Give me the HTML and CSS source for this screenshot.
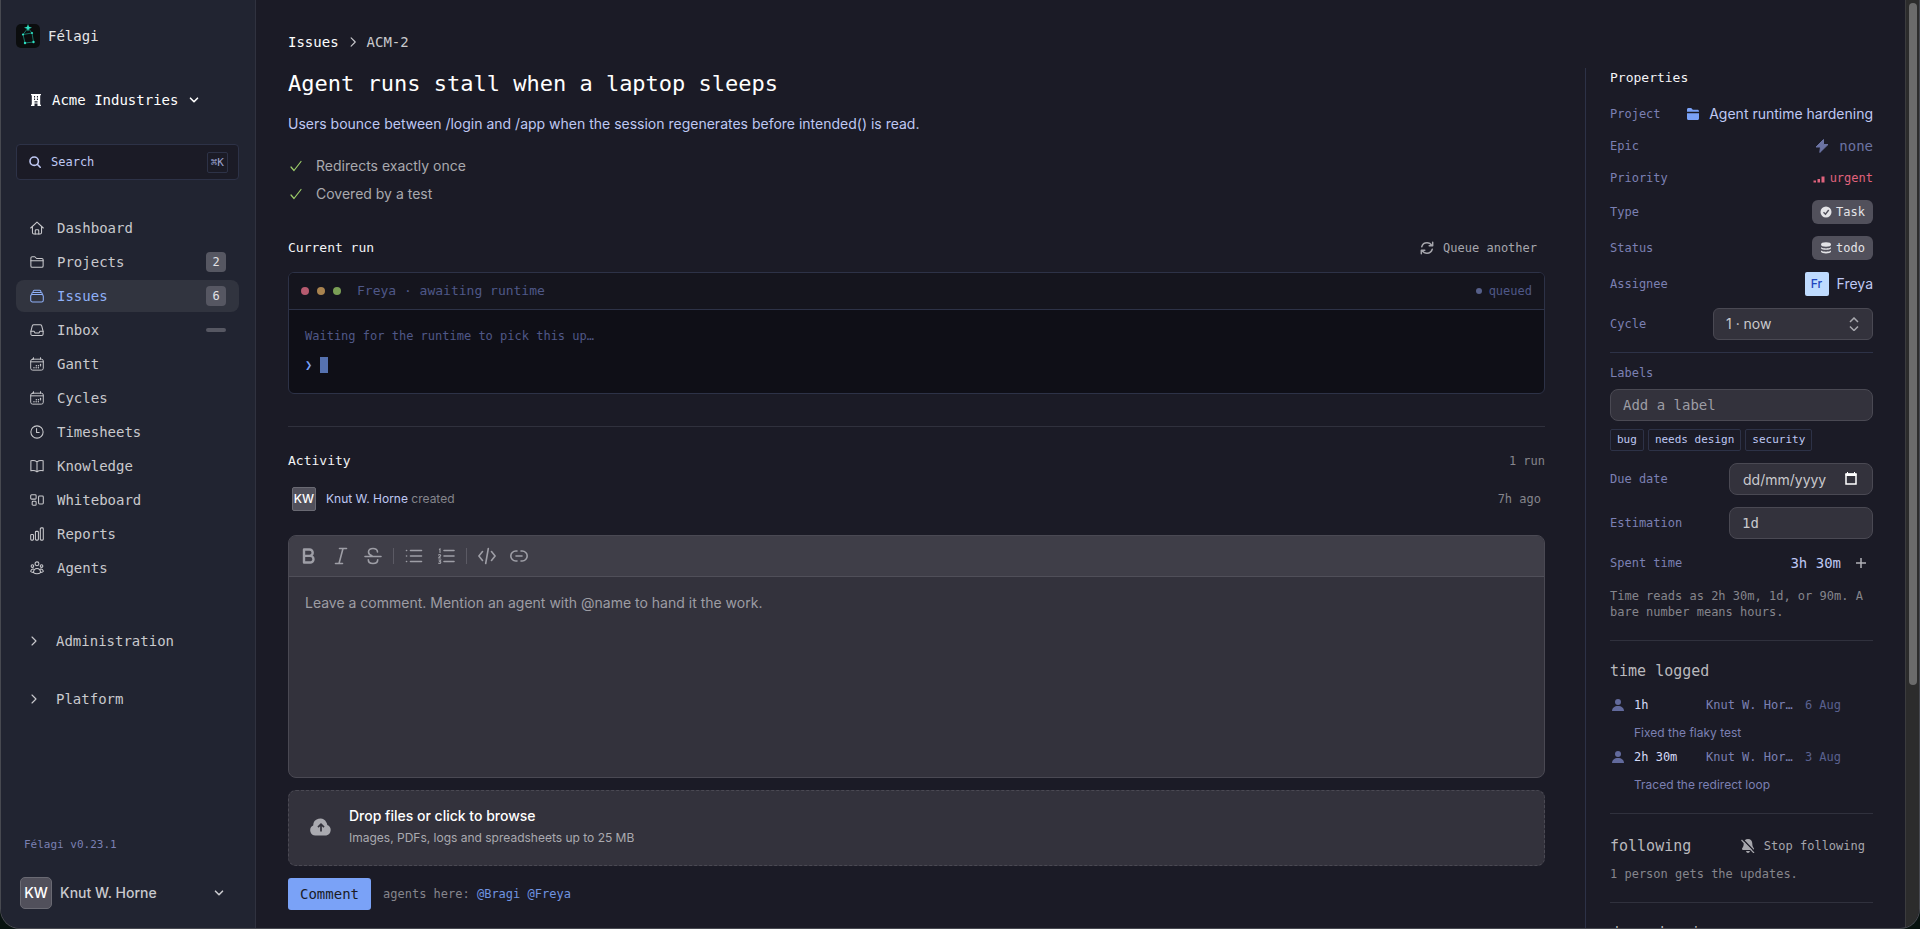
FILE: index.html
```
<!DOCTYPE html>
<html lang="en">
<head>
<meta charset="utf-8">
<title>ACM-2 · Félagi</title>
<link rel="stylesheet" href="styles.css">
</head>
<body>
<svg class="sprite" aria-hidden="true">
  <symbol id="down" viewBox="0 0 16 16"><path d="M4.500 6.200l3.500 3.500 3.500-3.500" fill="none" stroke="currentColor" stroke-width="1.600" stroke-linecap="round" stroke-linejoin="round"/></symbol>
  <symbol id="right" viewBox="0 0 16 16"><path d="M5.500 2.500l5.500 5.500-5.500 5.500" fill="none" stroke="currentColor" stroke-width="1.500" stroke-linecap="round" stroke-linejoin="round"/></symbol>
  <symbol id="chevron" viewBox="0 0 12 12"><path d="M2 2l4 4-4 4" fill="none" stroke="currentColor" stroke-width="1.100" stroke-linecap="round" stroke-linejoin="round"/></symbol>
  <symbol id="calendar" viewBox="0 0 16 16"><g fill="none" stroke="currentColor" stroke-width="1.100" stroke-linecap="round" stroke-linejoin="round"><rect x=".8" y="2.500" width="14.400" height="12.500" rx="2.200"/><path d="M4 .8v1.700M12 .8v1.700M.8 5.500h14.400"/><path d="M4.500 12.300h.1M7 12.300h.1M9.500 12.300h.1M7.200 10h.1M9.600 10h.1M12 10h.1M12 8.500h.1" stroke-width="1.500"/></g></symbol>
  <symbol id="user" viewBox="0 0 12 12"><circle cx="6" cy="3" r="3" fill="currentColor"/><path d="M0 12c0-3 2.500-5 6-5s6 2 6 5z" fill="currentColor"/></symbol>
  <symbol id="check" viewBox="0 0 14 14"><path d="M2 8l3 3.500 7-9" fill="none" stroke="currentColor" stroke-width="1.200" stroke-linecap="round" stroke-linejoin="round"/></symbol>
</svg>
<div class="frame">
  <aside class="sidebar">
    <a class="brand" href="#">
      <svg class="logo" viewBox="0 0 24 24" aria-hidden="true"><rect width="24" height="24" rx="5" fill="#0b0d0e"/><path d="M12 4L7 10.500l2 8.500 8.500-1L16 9z" fill="none" stroke="#1a8a7a" stroke-width=".8"/><path d="M7 10.500L16 9" stroke="#1a8a7a" stroke-width=".8"/><path d="M12 0l1 2.700L16 3.800l-3 1L12 7.500l-1-2.700-3-1 3-1.100z" fill="#2ee0c2"/><g fill="#2ee0c2"><circle cx="7" cy="10.500" r="1.100"/><circle cx="16" cy="9" r="1.100"/><circle cx="9" cy="19" r="1.200"/><circle cx="17.500" cy="18" r="1.200"/></g></svg>
      <span>Félagi</span>
    </a>
    <button class="workspace" type="button">
      <svg class="icon12" viewBox="0 0 12 12" aria-hidden="true"><path fill="currentColor" fill-rule="evenodd" d="M1 0h10v1.200h-.8v9.600h.8V12H7.500V9.500h-3V12H1v-1.200h.8V1.200H1zm3 2v1.400h1.100V2zm2.900 0v1.400H8V2zM4 4.500v1.400h1.100V4.500zm2.900 0v1.400H8V4.500zM4.500 7.200v1.200h3V7.200z"/></svg>
      <span>Acme Industries</span>
      <svg class="icon16" aria-hidden="true"><use href="#down"/></svg>
    </button>
    <button class="search" type="button">
      <svg class="icon12" viewBox="0 0 12 12" aria-hidden="true"><g fill="none" stroke="currentColor" stroke-width="1.600" stroke-linecap="round"><circle cx="5.200" cy="5.200" r="4.200"/><path d="M8.500 8.500l2.700 2.700"/></g></svg>
      <span>Search</span>
      <kbd>⌘K</kbd>
    </button>
    <nav class="nav">
      <a href="#"><svg class="icon14" viewBox="0 0 16 16"><g class="line"><path d="M.8 8L8 1.200 15.200 8M2.800 6.500V13c0 1 .7 1.800 1.700 1.800h7c1 0 1.700-.8 1.700-1.800V6.500"/><path d="M6 14.800V11c0-.6.400-1 1-1h2c.6 0 1 .4 1 1v3.800"/></g></svg><span>Dashboard</span></a>
      <a href="#"><svg class="icon14" viewBox="0 0 16 16"><g class="line"><path d="M1 12.500v-9C1 2.500 1.700 2 2.500 2h3l2 2h6c.8 0 1.500.6 1.500 1.500v7c0 .9-.7 1.500-1.500 1.500h-11C1.700 14 1 13.400 1 12.500z"/><path d="M1 6.500h14"/></g></svg><span>Projects</span><b class="badge">2</b></a>
      <a href="#" class="active" aria-current="page"><svg class="icon14" viewBox="0 0 16 16"><g class="line"><rect x=".8" y="6.200" width="14.400" height="8.600" rx="2"/><path d="M2 6.200V5.500C2 4.600 2.600 4 3.500 4h9c.9 0 1.500.6 1.500 1.500v.7M3.500 4v-.8c0-1 .6-1.700 1.500-1.700h6c.9 0 1.500.7 1.500 1.700V4"/></g></svg><span>Issues</span><b class="badge">6</b></a>
      <a href="#"><svg class="icon14" viewBox="0 0 16 16"><g class="line"><path d="M1 9.500L2.600 3.300C2.900 2.400 3.500 2 4.300 2h7.400c.8 0 1.400.4 1.700 1.300L15 9.500v3c0 1-.6 1.700-1.600 1.700H2.600c-1 0-1.600-.7-1.600-1.700z"/><path d="M1 9.500h3.600l1.200 2h4.400l1.200-2H15"/></g></svg><span>Inbox</span><b class="badge empty"></b></a>
      <a href="#"><svg class="icon14"><use href="#calendar"/></svg><span>Gantt</span></a>
      <a href="#"><svg class="icon14"><use href="#calendar"/></svg><span>Cycles</span></a>
      <a href="#"><svg class="icon14" viewBox="0 0 16 16"><g class="line"><circle cx="8" cy="8" r="7"/><path d="M7.500 4v4.500H10.500"/></g></svg><span>Timesheets</span></a>
      <a href="#"><svg class="icon14" viewBox="0 0 16 16"><g class="line"><path d="M8 3.200C6 1.700 3.500 1.500 1 2v11.500c2.500-.5 5-.3 7 1.200 2-1.500 4.500-1.700 7-1.200V2c-2.500-.5-5-.3-7 1.200zM8 3.200v11.500"/></g></svg><span>Knowledge</span></a>
      <a href="#"><svg class="icon14" viewBox="0 0 16 16"><g class="line"><rect x=".8" y="2" width="6.200" height="5" rx="1"/><rect x="2.500" y="9.500" width="4.500" height="4.500" rx="1"/><rect x="9.800" y="3.500" width="5.400" height="9" rx="1"/></g></svg><span>Whiteboard</span></a>
      <a href="#"><svg class="icon14" viewBox="0 0 16 16"><g class="line"><rect x=".8" y="8.500" width="3.200" height="6.500" rx="1"/><rect x="6.200" y="5" width="3.400" height="10" rx="1"/><rect x="11.800" y="1" width="3.400" height="14" rx="1"/></g></svg><span>Reports</span></a>
      <a href="#"><svg class="icon14" viewBox="0 0 16 16"><g class="line"><circle cx="8" cy="3.200" r="2.200"/><circle cx="2.800" cy="5.800" r="1.500"/><circle cx="13.200" cy="5.800" r="1.500"/><path d="M4 13.200C4 10.300 5.700 8.500 8 8.500s4 1.800 4 4.700c-1 .9-2.400 1.400-4 1.400s-3-.5-4-1.400zM4 9.300C2.300 9 1 10 .8 12c.6.600 1.400.900 2.600 1M12 9.300c1.700-.3 3 .7 3.200 2.700-.6.600-1.400.9-2.600 1"/></g></svg><span>Agents</span></a>
    </nav>
    <div class="groups">
      <button type="button"><svg class="icon12"><use href="#chevron"/></svg><span>Administration</span></button>
      <button type="button"><svg class="icon12"><use href="#chevron"/></svg><span>Platform</span></button>
    </div>
    <p class="version">Félagi v0.23.1</p>
    <button class="account" type="button">
      <span class="avatar large">KW</span>
      <span class="account-name">Knut W. Horne</span>
      <svg class="icon16" aria-hidden="true"><use href="#down"/></svg>
    </button>
  </aside>

  <main class="page">
    <nav class="crumbs" aria-label="Breadcrumb">
      <a href="#">Issues</a>
      <svg class="icon12" aria-hidden="true"><use href="#right"/></svg>
      <span>ACM-2</span>
    </nav>
    <div class="columns">
      <div class="issue">
        <h1>Agent runs stall when a laptop sleeps</h1>
        <p class="summary">Users bounce between /login and /app when the session regenerates before intended() is read.</p>
        <ul class="criteria">
          <li><svg class="icon14"><use href="#check"/></svg>Redirects exactly once</li>
          <li><svg class="icon14"><use href="#check"/></svg>Covered by a test</li>
        </ul>
        <div class="run-head">
          <h2>Current run</h2>
          <button class="ghost" type="button"><svg class="icon14" viewBox="0 0 16 16" aria-hidden="true"><g fill="none" stroke="currentColor" stroke-width="1.700" stroke-linecap="round" stroke-linejoin="round"><path d="M2 6.500C2.800 3.800 5.200 2 8 2c2.300 0 4.300 1.200 5.400 3M14.500 1.500v4h-4M14 9.500c-.8 2.700-3.200 4.500-6 4.500-2.300 0-4.300-1.200-5.400-3M1.500 14.500v-4h4"/></g></svg><span>Queue another</span></button>
        </div>
        <section class="terminal">
          <header>
            <i class="dot red"></i><i class="dot amber"></i><i class="dot green"></i>
            <span class="terminal-title">Freya · awaiting runtime</span>
            <span class="queued">queued</span>
          </header>
          <div class="terminal-body">
            <p>Waiting for the runtime to pick this up…</p>
            <p class="prompt"><span>❯</span><i></i></p>
          </div>
        </section>
        <div class="activity-head">
          <h2>Activity</h2>
          <span>1 run</span>
        </div>
        <div class="event">
          <span class="avatar">KW</span>
          <p><b>Knut W. Horne</b> created</p>
          <time>7h ago</time>
        </div>
        <form class="composer">
          <div class="editor">
            <div class="toolbar">
              <button type="button" aria-label="Bold"><svg viewBox="0 0 18 18"><path d="M4 2.500h5.500a3.200 3.200 0 0 1 0 6.400H4zM4 8.900h6.200a3.300 3.300 0 0 1 0 6.600H4z" fill="none" stroke="currentColor" stroke-width="2.400" stroke-linejoin="round"/></svg></button>
              <button type="button" aria-label="Italic"><svg viewBox="0 0 18 18"><path class="tool" d="M7.500 1.500h7M3.500 16.500h7M11 1.500l-4 15"/></svg></button>
              <button type="button" aria-label="Strikethrough"><svg viewBox="0 0 18 18"><path class="tool" d="M1 9.500h16M13.500 5c0-2-1.800-3.500-4.500-3.500S4.500 3 4.500 5c0 2 1.500 3 3.500 3.700M13.700 12.700c0 2.300-2 3.800-4.700 3.800s-4.700-1.500-4.700-3.800"/></svg></button>
              <i></i>
              <button type="button" aria-label="Bullet list"><svg viewBox="0 0 18 18"><path class="tool" d="M5.500 3.500h11M5.500 9h11M5.500 14.500h11M1.500 3.500h.1M1.500 9h.1M1.500 14.500h.1"/></svg></button>
              <button type="button" aria-label="Numbered list"><svg viewBox="0 0 18 18"><path class="tool" d="M7 3.500h10M7 9h10M7 14.500h10"/><path d="M2 2.500l1-.5v4M1.500 8.500c0-1.300 2.200-1.200 2.200 0 0 .8-2 1.400-2 2.500h2.200M1.500 13h2.200l-1 1.400c1.500 0 1.500 2-.2 2-.5 0-.9-.1-1.200-.5" fill="none" stroke="currentColor" stroke-width="1.100"/></svg></button>
              <i></i>
              <button type="button" aria-label="Code"><svg viewBox="0 0 18 18"><path class="tool" d="M4.500 4.500L.9 9l3.600 4.500M13.500 4.500L17.100 9l-3.600 4.500M10.300 1.500L7.700 16.500"/></svg></button>
              <button type="button" aria-label="Link"><svg viewBox="0 0 18 18"><path class="tool" d="M7 4H5.800a5 5 0 0 0 0 10H7M11 4h1.200a5 5 0 0 1 0 10H11M6 9h6"/></svg></button>
            </div>
            <textarea aria-label="Comment" placeholder="Leave a comment. Mention an agent with @name to hand it the work."></textarea>
          </div>
          <button class="dropzone" type="button">
            <svg viewBox="0 0 22 18" aria-hidden="true"><path d="M5.500 17.500a5.200 5.200 0 0 1-2.300-9.900A7 7 0 0 1 16.300 4.200c.6 1 .8 1.600 1 2.700a5.600 5.600 0 0 1-1 10.600z" fill="currentColor"/><path d="M11 13.500V6.500M8 9.200l3-3 3 3" fill="none" stroke="#33323c" stroke-width="1.700"/></svg>
            <span><strong>Drop files or click to browse</strong><small>Images, PDFs, logs and spreadsheets up to 25 MB</small></span>
          </button>
          <div class="submit">
            <button class="primary" type="submit">Comment</button>
            <p>agents here: <a href="#">@Bragi</a> <a href="#">@Freya</a></p>
          </div>
        </form>
      </div>

      <aside class="properties">
        <h2>Properties</h2>
        <div class="rows">
          <div class="row"><span class="label">Project</span><a class="project" href="#"><svg class="icon12" viewBox="0 0 12 12"><path d="M0 3.800V1.500C0 .6.600 0 1.500 0h2.700l1.600 1.700h4.700c.9 0 1.500.6 1.500 1.500v.6zM0 5.200h12v5.300c0 .9-.6 1.500-1.500 1.500h-9C.6 12 0 11.400 0 10.500z" fill="currentColor"/></svg><span>Agent runtime hardening</span></a></div>
          <div class="row"><span class="label">Epic</span><span class="epic"><svg class="icon14" viewBox="0 0 14 14"><path d="M8.500 0.500L1 8h4.500L4.800 13.500 13 5.500H8.500z" fill="currentColor" stroke="currentColor" stroke-linejoin="round"/></svg>none</span></div>
          <div class="row"><span class="label">Priority</span><span class="urgent"><svg class="icon12" viewBox="0 0 12 12"><path d="M.5 8.500h2.500v2H.5zM4.500 7h2.500v3.500H4.500zM8.500 4.500h3v6h-3z" fill="currentColor"/></svg>urgent</span></div>
          <div class="row"><span class="label">Type</span><span class="tag"><svg class="icon12" viewBox="0 0 12 12"><circle cx="6" cy="6" r="5.500" fill="currentColor"/><path d="M3.500 6.200l2 2L8.700 4" fill="none" stroke="#51505b" stroke-width="1.400"/></svg>Task</span></div>
          <div class="row"><span class="label">Status</span><span class="tag"><svg class="icon12" viewBox="0 0 12 12"><ellipse cx="6" cy="2.500" rx="5" ry="2.200" fill="currentColor"/><path d="M1 5.200c2 1.600 8 1.600 10 0v1c-1 2-9 2-10 0zM1 8.500c2 1.600 8 1.600 10 0v1.200c-1 2.300-9 2.300-10 0z" fill="currentColor"/></svg>todo</span></div>
          <div class="row"><span class="label">Assignee</span><span class="assignee"><span class="avatar pale">Fr</span>Freya</span></div>
          <div class="row"><label class="label" for="cycle">Cycle</label><span class="select"><select id="cycle"><option>1 · now</option></select><svg viewBox="0 0 10 14" aria-hidden="true"><path d="M1 5l4-4 4 4M1 9.500l4 4 4-4" fill="none" stroke="currentColor" stroke-width="1.500"/></svg></span></div>
          <hr>
          <div class="labels">
            <label class="label" for="labels">Labels</label>
            <input class="field mono" id="labels" type="text" placeholder="Add a label">
            <div class="chips"><span>bug</span><span>needs design</span><span>security</span></div>
          </div>
          <div class="row"><label class="label" for="due">Due date</label><span class="date"><input class="field" id="due" type="text" placeholder="dd/mm/yyyy"><svg viewBox="0 0 12 13" aria-hidden="true"><path d="M1 2h10v10H1z" fill="none" stroke="currentColor" stroke-width="1.500"/><path d="M1 2h10v1.500H1zM2.500 0v2M9.500 0v2" fill="currentColor" stroke="currentColor"/></svg></span></div>
          <div class="row"><label class="label" for="estimate">Estimation</label><input class="field short" id="estimate" type="text" value="1d"></div>
          <div class="row"><span class="label">Spent time</span><span class="spent">3h 30m<button type="button" aria-label="Log time"><svg class="icon12" viewBox="0 0 12 12"><path d="M6 1v10M1 6h10" stroke="currentColor" stroke-width="1.500"/></svg></button></span></div>
          <p class="hint">Time reads as 2h 30m, 1d, or 90m. A bare number means hours.</p>
        </div>
        <section class="block">
          <h3>time logged</h3>
          <ul class="log">
            <li><svg class="icon12"><use href="#user"/></svg><b>1h</b><span>Knut W. Hor…</span><time>6 Aug</time><p>Fixed the flaky test</p></li>
            <li><svg class="icon12"><use href="#user"/></svg><b>2h 30m</b><span>Knut W. Hor…</span><time>3 Aug</time><p>Traced the redirect loop</p></li>
          </ul>
        </section>
        <section class="block following">
          <div class="block-head"><h3>following</h3><button class="ghost" type="button"><svg class="icon14" viewBox="0 0 14 14" aria-hidden="true"><path d="M7 0C4.300 0 2.700 2 2.700 4.500c0 2.500-.7 3.500-1.700 5 0 1 .5 1.500 1.500 1.500h9c1 0 1.500-.5 1.500-1.500-1-1.500-1.700-2.500-1.700-5C11.300 2 9.700 0 7 0zM5 12c.4 1.200 1 2 2 2s1.600-.8 2-2z" fill="currentColor"/><path d="M1.500 0L14 13" stroke="#1b1b26" stroke-width="1.400"/><path d="M.5 1L13 14" stroke="currentColor" stroke-width="1.200"/></svg><span>Stop following</span></button></div>
          <p>1 person gets the updates.</p>
        </section>
        <section class="block"><h3>dependencies</h3></section>
      </aside>
    </div>
  </main>
  <div class="scrollbar" aria-hidden="true"><i></i></div>
</div>
</body>
</html>
```
FILE: styles.css
```
:root {
  --mono: "DejaVu Sans Mono", "Liberation Mono", monospace;
  --sans: Inter, "Liberation Sans", sans-serif;
  --bg: #1b1b26;
  --line: #2d3247;
  --label: #7b80b3;
  --text: #c9c9cd;
  --muted: #85858c;
  --lavender: #bfc8f3;
  --blue: #7aa2f7;
  --field: #33323c;
  --field-line: #4a4953;
}
* { box-sizing: border-box; }
body { margin: 0; background: #07120f; color: var(--text); font: 14px/20px var(--mono); }
h1, h2, h3, p, ul { margin: 0; padding: 0; font-weight: 400; }
ul { list-style: none; }
a { color: inherit; text-decoration: none; }
button, input, select, textarea { margin: 0; padding: 0; border: 0; background: none; color: inherit; font: inherit; text-align: left; }
b { font-weight: 400; }
svg { display: block; flex: none; }
.sprite { position: absolute; width: 0; height: 0; }
.icon12 { width: 12px; height: 12px; }
.icon14 { width: 14px; height: 14px; }
.icon16 { width: 16px; height: 16px; }
.line { fill: none; stroke: currentColor; stroke-width: 1.2; stroke-linecap: round; stroke-linejoin: round; }

.frame { display: flex; height: 100vh; overflow: hidden; background: var(--bg); border: 1px solid #474950; border-top: 0; border-radius: 0 0 20px 20px; }

.sidebar { display: flex; flex: none; flex-direction: column; width: 255px; padding: 24px 16px 19px 15px; background: #212431; border-right: 1px solid #30323f; }
.brand { display: flex; align-items: center; gap: 8px; color: #e6e6e8; }
.logo { width: 24px; height: 24px; }
.workspace { display: flex; align-items: center; gap: 10px; height: 32px; margin-top: 36px; padding-left: 14px; color: #fff; }
.workspace .icon16 { margin-left: -2px; }
.search { display: flex; align-items: center; gap: 10px; height: 36px; margin-top: 28px; padding: 0 10px 0 12px; background: var(--bg); border: 1px solid var(--line); border-radius: 4px; color: var(--lavender); font-size: 12px; }
.search kbd { margin-left: auto; padding: 0 3px; border: 1px solid var(--line); border-radius: 2px; color: #9ba3cf; font: 11px/19px var(--mono); }
.nav { display: flex; flex-direction: column; gap: 2px; margin-top: 32px; }
.nav a { display: flex; align-items: center; gap: 13px; height: 32px; padding: 0 13px 0 14px; border-radius: 8px; }
.nav .active { background: #31343f; color: #8fb0f8; }
.badge { min-width: 20px; margin-left: auto; border-radius: 4px; background: #565762; color: #e2e2e5; font-size: 12px; text-align: center; }
.badge.empty { height: 4px; border-radius: 2px; }
.groups { display: flex; flex-direction: column; gap: 26px; margin-top: 41px; }
.groups button { display: flex; align-items: center; gap: 14px; height: 32px; padding-left: 14px; }
.version { margin-top: auto; padding-left: 8px; color: var(--label); font-size: 11px; }
.account { display: flex; align-items: center; gap: 8px; margin-top: 22px; padding: 0 12px 0 4px; font: 500 14px/20px var(--sans); }
.account .icon16 { margin-left: auto; }
.avatar { display: grid; place-items: center; flex: none; width: 24px; height: 24px; border: 1px solid #6a6a73; border-radius: 2px; background: #51505b; color: #fff; font: 500 12px/16px var(--sans); }
.avatar.large { width: 32px; height: 32px; border-radius: 5px; font-size: 14px; }
.avatar.pale { border: 0; background: #bfdbfe; color: #1e45bd; }

.page { flex: 1; min-width: 0; padding: 32px 32px 0; }
.crumbs { display: flex; align-items: center; gap: 8px; }
.crumbs a { color: #fff; }
.columns { display: grid; grid-template-columns: minmax(0, 1fr) 288px; gap: 40px; margin-top: 16px; }
h1 { color: #fff; font-size: 22px; line-height: 32px; }
h2 { color: #f4f4f6; font-size: 13px; line-height: 20px; }
.summary { margin-top: 12px; color: var(--lavender); font: 14px/24px var(--sans); }
.criteria { margin-top: 16px; color: #a9a9ae; font: 14px/28px var(--sans); }
.criteria li { display: flex; align-items: center; gap: 13px; padding-left: 1px; }
.criteria svg { color: #9ece6a; }
.run-head { display: flex; align-items: center; justify-content: space-between; height: 32px; margin-top: 24px; }
.ghost { display: flex; align-items: center; gap: 9px; height: 32px; padding: 0 8px; color: #a6a6ac; font-size: 12px; }
.terminal { margin-top: 8px; overflow: hidden; border: 1px solid var(--line); border-radius: 6px; background: #0f0f17; color: #4f5888; font-size: 12px; }
.terminal header { display: flex; align-items: center; gap: 8px; height: 37px; padding: 0 12px; border-bottom: 1px solid var(--line); background: #15151e; font-size: 13px; }
.dot { width: 8px; height: 8px; border-radius: 50%; }
.red { background: #b65a6f; }
.amber { background: #a9834f; }
.green { background: #7a9e55; }
.terminal-title { margin-left: 8px; }
.queued { display: flex; align-items: center; gap: 7px; margin-left: auto; font-size: 12px; }
.queued::before { width: 6px; height: 6px; border-radius: 50%; background: #565f89; content: ""; }
.terminal-body { padding: 16px 16px 18px; }
.prompt { display: flex; align-items: center; gap: 8px; margin-top: 9px; color: var(--blue); }
.prompt i { width: 8px; height: 16px; background: #5672b0; }
.activity-head { display: flex; justify-content: space-between; margin-top: 32px; padding-top: 24px; border-top: 1px solid #30313d; }
.activity-head span, .event time { color: var(--muted); font-size: 12px; }
.event { display: flex; align-items: center; gap: 10px; margin-top: 16px; padding: 0 4px; color: var(--muted); }
.event p { flex: 1; font: 12px/20px var(--sans); }
.event b { color: var(--lavender); }
.composer { display: flex; flex-direction: column; gap: 12px; margin-top: 24px; }
.editor { overflow: hidden; border: 1px solid var(--field-line); border-radius: 8px; background: var(--field); }
.toolbar { display: flex; align-items: center; height: 41px; padding: 0 4px; border-bottom: 1px solid #504f59; background: #3f3e48; color: #9e9ea6; }
.toolbar button { display: grid; place-items: center; width: 32px; height: 32px; }
.toolbar svg { width: 18px; height: 18px; }
.toolbar i { width: 1px; height: 16px; margin: 0 4px; background: #5b5a64; }
.tool { fill: none; stroke: currentColor; stroke-width: 1.6; stroke-linecap: round; stroke-linejoin: round; }
textarea { display: block; width: 100%; height: 200px; padding: 16px; resize: none; font: 14px/20px var(--sans); }
::placeholder { color: #9d9da4; opacity: 1; }
.dropzone { display: flex; align-items: center; gap: 17px; padding: 15px 21px 17px; border: 1px dashed #4a4953; border-radius: 8px; background: var(--field); color: #aaaab0; font-family: var(--sans); }
.dropzone svg { width: 22px; height: 18px; }
.dropzone strong { display: block; color: #fff; font-weight: 500; }
.dropzone small { display: block; padding-top: 2px; font-size: 12px; line-height: 20px; }
.submit { display: flex; align-items: center; gap: 12px; color: var(--muted); font-size: 12px; }
.primary { height: 32px; padding: 0 12px; border-radius: 3px; background: var(--blue); color: #1b1b26; font-size: 14px; }
.submit a { color: #6f93e0; }

.properties { padding-left: 24px; border-left: 1px solid var(--line); }
.rows { display: flex; flex-direction: column; gap: 12px; margin-top: 16px; }
.row { display: flex; align-items: center; justify-content: space-between; color: var(--lavender); }
.label { color: var(--label); font-size: 12px; line-height: 16px; }
.project, .epic, .assignee { display: flex; align-items: center; gap: 10px; font-family: var(--sans); }
.project svg { color: var(--blue); }
.epic { color: #6b73a3; font-family: var(--mono); }
.assignee { gap: 8px; }
.urgent { display: flex; align-items: center; gap: 5px; color: #e0637d; font-size: 12px; }
.tag { display: flex; align-items: center; gap: 4px; height: 24px; padding: 0 8px; border-radius: 6px; background: #51505b; color: #e4e4e7; font-size: 12px; }
hr { width: 100%; height: 1px; margin: 0; border: 0; background: var(--line); }
.select, .date { position: relative; width: 160px; color: var(--text); font-family: var(--sans); }
.select select, .field { width: 100%; height: 32px; padding: 0 12px; border: 1px solid var(--field-line); border-radius: 8px; background: var(--field); color: var(--text); font-family: var(--sans); }
.select select { display: block; border-radius: 6px; appearance: none; }
.select svg { position: absolute; top: 9px; right: 14px; width: 10px; height: 14px; color: #a9a9af; pointer-events: none; }
.date { width: 144px; }
.date .field { display: block; padding: 0 13px; }
.date ::placeholder { color: var(--text); }
.date svg { position: absolute; top: 9px; right: 16px; width: 12px; height: 13px; color: #fff; pointer-events: none; }
.field.mono { font-family: var(--mono); }
.field.short { width: 144px; font-family: var(--mono); }
.labels { display: flex; flex-direction: column; gap: 8px; }
.chips { display: flex; gap: 4px; }
.chips span { padding: 0 6px; border: 1px solid var(--line); border-radius: 2px; color: var(--lavender); font-size: 11px; }
.spent { display: flex; align-items: center; gap: 8px; }
.spent button { display: grid; place-items: center; width: 24px; height: 24px; color: #b1b1b6; }
.hint, .following p { color: var(--muted); font-size: 12px; line-height: 16px; }
.hint { padding-top: 1px; }
.block { margin-top: 20px; padding-top: 20px; border-top: 1px solid #30313d; }
h3 { color: #b9b9bd; font-size: 15px; line-height: 20px; }
.log { display: flex; flex-direction: column; gap: 4px; margin-top: 14px; color: var(--label); font-size: 12px; }
.log li { display: grid; grid-template-columns: 14px 64px 88px 1fr; align-items: center; gap: 8px; padding-left: 2px; padding-right: 32px; }
.log svg { color: #626a9c; }
.log b { color: #d4daf8; }
.log span { white-space: nowrap; }
.log time { color: #5a618f; text-align: right; white-space: nowrap; }
.log p { grid-column: 2 / -1; font-family: var(--sans); }
.block.following { margin-top: 18px; padding-top: 16px; }
.block-head { display: flex; align-items: center; justify-content: space-between; }
.following p { margin-top: 4px; }

.scrollbar { flex: none; width: 14px; padding: 3px 2px 3px 3px; border-left: 1px solid #3c3c3e; background: #2c2c2c; }
.scrollbar i { display: block; height: 74%; border-radius: 4px; background: #6b6b6b; }
```
